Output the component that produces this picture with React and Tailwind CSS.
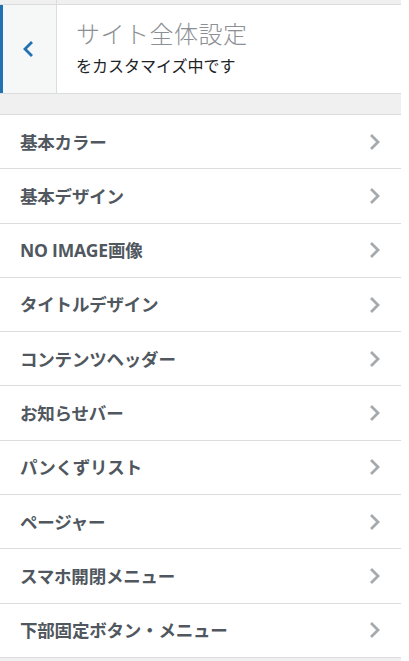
import React from "react";

const sections = [
  "基本カラー",
  "基本デザイン",
  "NO IMAGE画像",
  "タイトルデザイン",
  "コンテンツヘッダー",
  "お知らせバー",
  "パンくずリスト",
  "ページャー",
  "スマホ開閉メニュー",
  "下部固定ボタン・メニュー",
];

const font = {
  fontFamily: '"Open Sans", "Noto Sans CJK JP", sans-serif',
};

function Chevron({ className }) {
  return (
    <svg viewBox="0 0 12 18" className={className} fill="none" stroke="currentColor" strokeWidth="2.8" strokeLinecap="square">
      <path d="M3 3l6 6-6 6" />
    </svg>
  );
}

export default function App() {
  return (
    <div className="min-h-screen bg-white" style={font}>
      <div className="w-[401px] bg-[#f0f0f1] min-h-screen">
        {/* leftover of previous header */}
        <div className="h-[5px] border-b border-[#dcdcde] flex">
          <div className="w-[57px] border-r border-[#dcdcde]" />
        </div>

        {/* panel header */}
        <div className="h-[89px] flex bg-white border-b border-[#dcdcde]">
          <button className="w-[57px] shrink-0 flex items-center justify-center bg-[#f6f7f7] border-l-[3px] border-[#2271b1] border-r border-r-[#dcdcde] text-[#2271b1]">
            <svg viewBox="0 0 12 18" className="w-[12px] h-[18px] -ml-[3px]" fill="none" stroke="currentColor" strokeWidth="2.8" strokeLinecap="square">
              <path d="M9 3L3 9l6 6" />
            </svg>
          </button>
          <div className="pl-[19px] pt-[13px] flex flex-col">
            <span className="text-[24px] leading-[32px] font-light text-[#8c8f94] tracking-[0.5px]">
              サイト全体設定
            </span>
            <span className="text-[16px] leading-[24px] text-[#1d2327] mt-[4px]">
              をカスタマイズ中です
            </span>
          </div>
        </div>

        <div className="h-[21px] border-b border-[#dcdcde]" />

        <ul>
          {sections.map((name) => (
            <li
              key={name}
              className="h-[54.3px] flex items-center justify-between bg-white border-b border-[#dcdcde] pl-[20px] pr-[20px]"
            >
              <span className="text-[17.5px] font-bold text-[#50575e] tracking-[-0.2px]">{name}</span>
              <Chevron className="w-[12px] h-[18px] text-[#a7aaad]" />
            </li>
          ))}
        </ul>
      </div>
    </div>
  );
}
